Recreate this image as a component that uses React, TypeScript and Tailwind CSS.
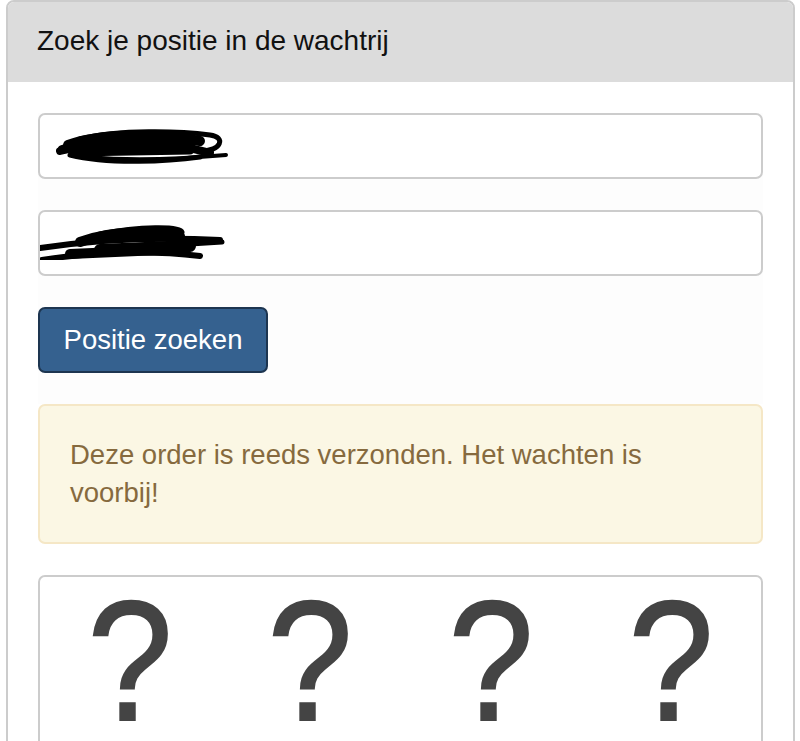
import React from "react";

function Scribble({ variant }: { variant: 1 | 2 }) {
  if (variant === 1) {
    return (
      <svg width="180" height="40" viewBox="0 0 180 40" className="absolute left-[10px] top-[10px]" fill="none" stroke="#000" strokeLinecap="round">
        <path d="M10 26 C40 18, 90 16, 140 20" strokeWidth="8" />
        <path d="M18 20 C50 8, 110 8, 150 16" strokeWidth="10" />
        <path d="M30 14 C70 4, 130 6, 160 10 C176 12, 172 26, 150 26" strokeWidth="5" />
        <path d="M20 30 C60 40, 120 36, 150 32" strokeWidth="5" />
        <path d="M12 24 L40 16 L80 22 L120 18 L160 28" strokeWidth="8" />
        <path d="M24 27 L140 25" strokeWidth="9" />
        <path d="M40 32 C80 36, 130 34, 176 30" strokeWidth="4" />
      </svg>
    );
  }
  return (
    <svg width="200" height="40" viewBox="0 0 200 40" className="absolute left-0 top-[8px]" fill="none" stroke="#000" strokeLinecap="round">
      <path d="M0 28 C40 22, 100 16, 180 20" strokeWidth="6" />
      <path d="M40 22 C70 10, 120 10, 140 16" strokeWidth="10" />
      <path d="M60 14 C100 6, 140 6, 142 12" strokeWidth="5" />
      <path d="M2 40 C50 32, 110 30, 160 36" strokeWidth="6" />
      <path d="M60 30 L150 26" strokeWidth="12" />
      <path d="M30 34 L120 30" strokeWidth="10" />
      <path d="M150 24 L182 22" strokeWidth="5" />
    </svg>
  );
}

export default function App() {
  const font = { fontFamily: '"Liberation Sans", Arial, sans-serif' };
  return (
    <div className="w-[800px] h-[741px] overflow-hidden bg-white" style={font}>
      <div className="ml-[6px] w-[789px] border-2 border-[#cccccc] rounded-t-[8px] h-[800px] overflow-hidden">
        <div className="h-[80px] bg-[#dcdcdc] flex items-center pl-[29px] text-[28px] text-[#111] pb-[2px]">
          Zoek je positie in de wachtrij
        </div>
        <div className="px-[30px] pt-[31px]">
          <div className="bg-[#fdfdfd]">
            <div className="relative h-[66px] border-2 border-[#cccccc] rounded-[7px] bg-white overflow-hidden">
              <Scribble variant={1} />
            </div>
            <div className="relative h-[66px] mt-[31px] border-2 border-[#cccccc] rounded-[7px] bg-white overflow-hidden">
              <Scribble variant={2} />
            </div>
            <div className="pt-[31px] pb-[31px]">
              <button className="h-[66px] w-[230px] bg-[#35618f] border-2 border-[#1d3550] rounded-[7px] text-white text-[27.5px]">
                Positie zoeken
              </button>
            </div>
          </div>
          <div className="border-2 border-[#f5e7c6] bg-[#fbf7e4] rounded-[7px] px-[30px] pt-[30px] pb-[30px] text-[27.5px] leading-[38px] text-[#866a3e]">
            Deze order is reeds verzonden. Het wachten is voorbij!
          </div>
          <div className="mt-[31px] border-2 border-[#cccccc] rounded-[7px] h-[200px] grid grid-cols-4 pt-[14px] text-[170px] leading-[140px] text-[#444444] [-webkit-text-stroke:2px_#444444]">
            <div className="text-center scale-x-[0.9]">?</div>
            <div className="text-center scale-x-[0.9]">?</div>
            <div className="text-center scale-x-[0.9]">?</div>
            <div className="text-center scale-x-[0.9]">?</div>
          </div>
        </div>
      </div>
    </div>
  );
}
